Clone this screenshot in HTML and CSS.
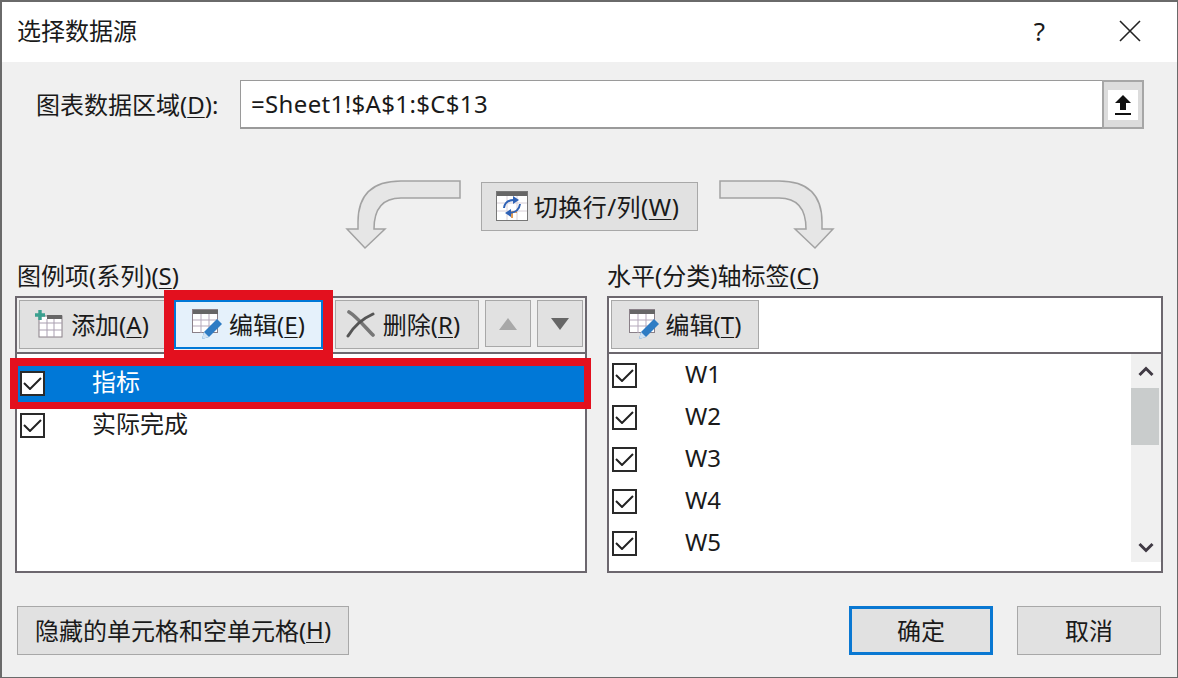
FILE: index.html
```html
<!DOCTYPE html>
<html lang="zh-CN">
<head>
<meta charset="utf-8">
<title>选择数据源</title>
<link rel="stylesheet" href="styles.css">
</head>
<body>
<div class="dialog">
  <header class="titlebar">
    <span class="title">选择数据源</span>
    <span class="help">?</span>
    <svg class="close" width="22" height="22" viewBox="0 0 22 22"><path d="M1 1 21 21M21 1 1 21" stroke="#222" stroke-width="1.6" fill="none"/></svg>
  </header>
  <main class="content">
    <div class="range-row">
      <label class="range-label">图表数据区域(<u>D</u>):</label>
      <div class="range-field">
        <span class="range-value">=Sheet1!$A$1:$C$13</span>
        <div class="collapse"><span class="collapse-inner">
          <svg width="18" height="22" viewBox="0 0 18 22"><path d="M9 1 17 9H12V16H6V9H1Z" fill="#111"/><rect x="1" y="19" width="16" height="2" fill="#111"/></svg>
        </span></div>
      </div>
    </div>

    <div class="switch-row">
      <svg class="bend" width="120" height="70" viewBox="0 0 120 70"><path d="M119 1V18H60Q33 18 33 49H44L24 68 6 49H17V42Q17 1 60 1Z"/></svg>
      <button class="btn switch-btn">
        <svg width="32" height="30" viewBox="0 0 32 30"><rect x=".5" y=".5" width="31" height="29" fill="#fff" stroke="#777"/><rect x="1" y="1" width="30" height="4" fill="#666"/><path d="M1 12H31M1 20H31M11 5V29M21 5V29" stroke="#d8d0d8"/><path d="M21 21H16V27" stroke="#d9822b" stroke-width="1.6" fill="none"/><path d="M8 17Q9 9 18 9" stroke="#2f62b5" stroke-width="2" fill="none"/><path d="M17 5 23 9 17 13Z" fill="#2f62b5"/><path d="M24 13Q23 21 14 22" stroke="#2f62b5" stroke-width="2" fill="none"/><path d="M15 18 9 22 15 26Z" fill="#2f62b5"/></svg>
        <span class="switch-text">切换行/列(<u>W</u>)</span>
      </button>
      <svg class="bend flip" width="120" height="70" viewBox="0 0 120 70"><path d="M119 1V18H60Q33 18 33 49H44L24 68 6 49H17V42Q17 1 60 1Z"/></svg>
    </div>

    <div class="panels">
      <section class="group group-left">
        <h2 class="group-title">图例项(系列)(<u>S</u>)</h2>
        <div class="panel">
          <div class="toolbar">
            <button class="btn tool tool-add">
              <svg width="28" height="28" viewBox="0 0 28 28"><rect x="4" y="6" width="23" height="21" fill="#fff" stroke="#8a8088"/><rect x="12" y="5" width="15" height="4" fill="#666"/><path d="M4 13H27M4 20H27M12 9V27M19 9V27" stroke="#a99fb0"/><path d="M5 0V10M0 5H10" stroke="#3aa08f" stroke-width="3.4"/></svg>
              <span>添加(<u>A</u>)</span>
            </button>
            <button class="btn tool tool-edit is-focus">
              <svg width="30" height="30" viewBox="0 0 30 30"><rect x=".5" y=".5" width="25" height="23" fill="#fff" stroke="#8a8088"/><rect x="1" y="1" width="25" height="4" fill="#666"/><path d="M1 11H26M1 17H26M9 5V24M17 5V24" stroke="#b5a9bb"/><path d="M10 30 12 23 25 10 30 15 17 28Z" fill="#2e7cc4"/><path d="M10 30 12 23 17 28Z" fill="#cfe2f3"/></svg>
              <span>编辑(<u>E</u>)</span>
            </button>
            <button class="btn tool tool-del">
              <svg width="30" height="28" viewBox="0 0 30 28"><path d="M3 2C10 6 20 18 27 25" stroke="#777" stroke-width="3.6" stroke-linecap="round" fill="none"/><path d="M27 4C18 8 8 16 2 26" stroke="#555" stroke-width="3" stroke-linecap="round" fill="none"/></svg>
              <span>删除(<u>R</u>)</span>
            </button>
            <button class="btn tool-arrow">
              <svg width="18" height="12" viewBox="0 0 18 12"><path d="M9 0 18 12H0Z" fill="#a8a8a8"/></svg>
            </button>
            <button class="btn tool-arrow">
              <svg width="18" height="12" viewBox="0 0 18 12"><path d="M0 0H18L9 12Z" fill="#666"/></svg>
            </button>
          </div>
          <ul class="list list-left">
            <li class="item is-selected"><span class="check"><svg width="19" height="13" viewBox="0 0 19 13"><path d="M1 6 7 12 18 1" stroke="#222" stroke-width="2" fill="none"/></svg></span><span class="item-text">指标</span></li>
            <li class="item"><span class="check"><svg width="19" height="13" viewBox="0 0 19 13"><path d="M1 6 7 12 18 1" stroke="#222" stroke-width="2" fill="none"/></svg></span><span class="item-text">实际完成</span></li>
          </ul>
          <div class="mark mark-btn"></div>
          <div class="mark mark-row"></div>
        </div>
      </section>

      <section class="group group-right">
        <h2 class="group-title">水平(分类)轴标签(<u>C</u>)</h2>
        <div class="panel">
          <div class="toolbar">
            <button class="btn tool tool-axis">
              <svg width="30" height="30" viewBox="0 0 30 30"><rect x=".5" y=".5" width="25" height="23" fill="#fff" stroke="#8a8088"/><rect x="1" y="1" width="25" height="4" fill="#666"/><path d="M1 11H26M1 17H26M9 5V24M17 5V24" stroke="#b5a9bb"/><path d="M10 30 12 23 25 10 30 15 17 28Z" fill="#2e7cc4"/><path d="M10 30 12 23 17 28Z" fill="#cfe2f3"/></svg>
              <span>编辑(<u>T</u>)</span>
            </button>
          </div>
          <div class="list-wrap">
            <ul class="list list-right">
              <li class="item"><span class="check"><svg width="19" height="13" viewBox="0 0 19 13"><path d="M1 6 7 12 18 1" stroke="#222" stroke-width="2" fill="none"/></svg></span><span class="item-text">W1</span></li>
              <li class="item"><span class="check"><svg width="19" height="13" viewBox="0 0 19 13"><path d="M1 6 7 12 18 1" stroke="#222" stroke-width="2" fill="none"/></svg></span><span class="item-text">W2</span></li>
              <li class="item"><span class="check"><svg width="19" height="13" viewBox="0 0 19 13"><path d="M1 6 7 12 18 1" stroke="#222" stroke-width="2" fill="none"/></svg></span><span class="item-text">W3</span></li>
              <li class="item"><span class="check"><svg width="19" height="13" viewBox="0 0 19 13"><path d="M1 6 7 12 18 1" stroke="#222" stroke-width="2" fill="none"/></svg></span><span class="item-text">W4</span></li>
              <li class="item"><span class="check"><svg width="19" height="13" viewBox="0 0 19 13"><path d="M1 6 7 12 18 1" stroke="#222" stroke-width="2" fill="none"/></svg></span><span class="item-text">W5</span></li>
            </ul>
            <div class="scrollbar">
              <span class="scroll-btn"><svg width="16" height="11" viewBox="0 0 16 11"><path d="M1.5 9 8 2.5 14.5 9" stroke="#403a44" stroke-width="3" fill="none"/></svg></span>
              <span class="scroll-thumb"></span>
              <span class="scroll-space"></span>
              <span class="scroll-btn scroll-btn-end"><svg width="16" height="11" viewBox="0 0 16 11"><path d="M1.5 2 8 8.5 14.5 2" stroke="#403a44" stroke-width="3" fill="none"/></svg></span>
            </div>
          </div>
        </div>
      </section>
    </div>

    <footer class="footer">
      <button class="btn btn-hidden">隐藏的单元格和空单元格(<u>H</u>)</button>
      <button class="btn btn-ok">确定</button>
      <button class="btn btn-cancel">取消</button>
    </footer>
  </main>
</div>
</body>
</html>
```

FILE: styles.css
```css
* { box-sizing: border-box; }
html, body { margin: 0; padding: 0; }
body {
  width: 1178px;
  height: 678px;
  overflow: hidden;
  font-family: "Noto Sans", "Noto Sans CJK SC", sans-serif;
  font-size: 24px;
  color: #1a1a1a;
}
u { text-underline-offset: 3px; text-decoration-thickness: 1px; }

.dialog {
  width: 1178px;
  height: 678px;
  display: flex;
  flex-direction: column;
  background: #f0f0f0;
  border: 2px solid #6a6a6a;
  border-right-width: 1px;
  border-bottom-width: 1px;
}
.titlebar {
  height: 60px;
  flex: none;
  display: flex;
  align-items: center;
  background: #fff;
  padding: 0 36px 2px 15px;
}
.title { flex: 1; line-height: 1; }
.help { margin-right: 74px; font-size: 26px; line-height: 1; }
.content { flex: 1; display: flex; flex-direction: column; }

.range-row {
  display: flex;
  align-items: center;
  height: 49px;
  margin: 18px 33px 0 34px;
}
.range-label { width: 204px; flex: none; line-height: 1; }
.range-field {
  flex: 1;
  height: 49px;
  display: flex;
  align-items: stretch;
  background: #fff;
  border: 1px solid #9a9a9a;
  border-bottom-width: 2px;
}
.range-value { flex: 1; padding-left: 10px; line-height: 46px; letter-spacing: .35px; }
.collapse {
  width: 42px;
  display: flex;
  align-items: center;
  justify-content: center;
  background: #dcdcdc;
  border: 2px solid #a6a6a6;
  margin: -1px -1px -2px 0;
}
.collapse-inner {
  width: 30px;
  height: 30px;
  display: flex;
  align-items: center;
  justify-content: center;
  background: #fff;
}

.btn {
  display: flex;
  align-items: center;
  justify-content: center;
  padding: 0 0 2px;
  font: inherit;
  color: inherit;
  background: #e1e1e1;
  border: 1px solid #a8a8a8;
}
.switch-row {
  display: flex;
  justify-content: center;
  align-items: flex-start;
  margin-top: 51px;
  height: 70px;
}
.bend { fill: #e6e6e6; stroke: #a2a2a2; stroke-width: 1.5; }
.flip { transform: scaleX(-1); margin-left: 21px; }
.switch-btn { width: 217px; height: 49px; margin: 2px 0 0 20px; gap: 6px; padding-right: 3px; }
.switch-text { letter-spacing: .5px; }

.panels {
  display: flex;
  gap: 20px;
  padding-left: 13px;
  margin-top: 14px;
}
.group-left { width: 572px; }
.group-right { width: 556px; }
.group-title {
  margin: 0 0 0 2px;
  height: 32px;
  font: inherit;
  line-height: 24px;
}
.group-right .group-title { margin-left: 0; }
.panel {
  position: relative;
  height: 277px;
  display: flex;
  flex-direction: column;
  background: #fff;
  border: 2px solid #6c676e;
}
.toolbar {
  height: 56px;
  flex: none;
  display: flex;
  align-items: flex-start;
  padding: 2px 0 0 2px;
  background: #f0f0f0;
  border-bottom: 2px solid #6c676e;
}
.group-right .toolbar { background: #fff; }
.tool { height: 49px; gap: 8px; }
.tool-add { width: 146px; }
.tool-edit { width: 149px; margin-left: 9px; gap: 7px; }
.tool-del { width: 144px; margin-left: 12px; gap: 7px; padding-right: 8px; }
.tool-axis { width: 148px; gap: 7px; }
.tool-arrow { width: 46px; height: 47px; margin-left: 6px; padding: 0; }
.is-focus { background: #e5f1fb; border: 2px solid #0078d7; }

.list { list-style: none; margin: 0; padding: 0; }
.list-left { padding-top: 8px; }
.list-wrap { flex: 1; display: flex; min-height: 0; }
.list-right { flex: 1; }
.item {
  height: 42px;
  display: flex;
  align-items: center;
  padding-left: 3px;
  line-height: 1;
}
.check {
  width: 25px;
  height: 25px;
  flex: none;
  display: flex;
  align-items: center;
  justify-content: center;
  background: #fff;
  border: 2px solid #2a2a2a;
}
.item-text { margin-left: 47px; padding-bottom: 2px; }
.list-right .item-text { margin-left: 48px; }
.is-selected { background: #0078d7; color: #fff; }

.scrollbar {
  width: 30px;
  flex: none;
  display: flex;
  flex-direction: column;
  margin-bottom: 9px;
  background: #f0f0f0;
}
.scroll-btn {
  height: 34px;
  flex: none;
  display: flex;
  align-items: center;
  justify-content: center;
}
.scroll-btn-end { height: 30px; }
.scroll-thumb { height: 57px; flex: none; width: 28px; background: #c9cccc; }
.scroll-space { flex: 1; }

.mark { position: absolute; border-style: solid; border-color: #e3101e; pointer-events: none; }
.mark-btn {
  left: 147px;
  top: -8px;
  width: 169px;
  height: 68px;
  border-width: 10px 10px 8px;
}
.mark-row {
  left: -7px;
  top: 60px;
  width: 581px;
  height: 51px;
  border-width: 8px 7px 7px 8px;
}

.footer {
  display: flex;
  margin-top: 33px;
  padding-left: 15px;
}
.footer .btn { height: 49px; }
.btn-hidden { width: 332px; }
.btn-ok { width: 144px; margin-left: 500px; border: 3px solid #0a78d2; }
.btn-cancel { width: 144px; margin-left: 24px; }
```
